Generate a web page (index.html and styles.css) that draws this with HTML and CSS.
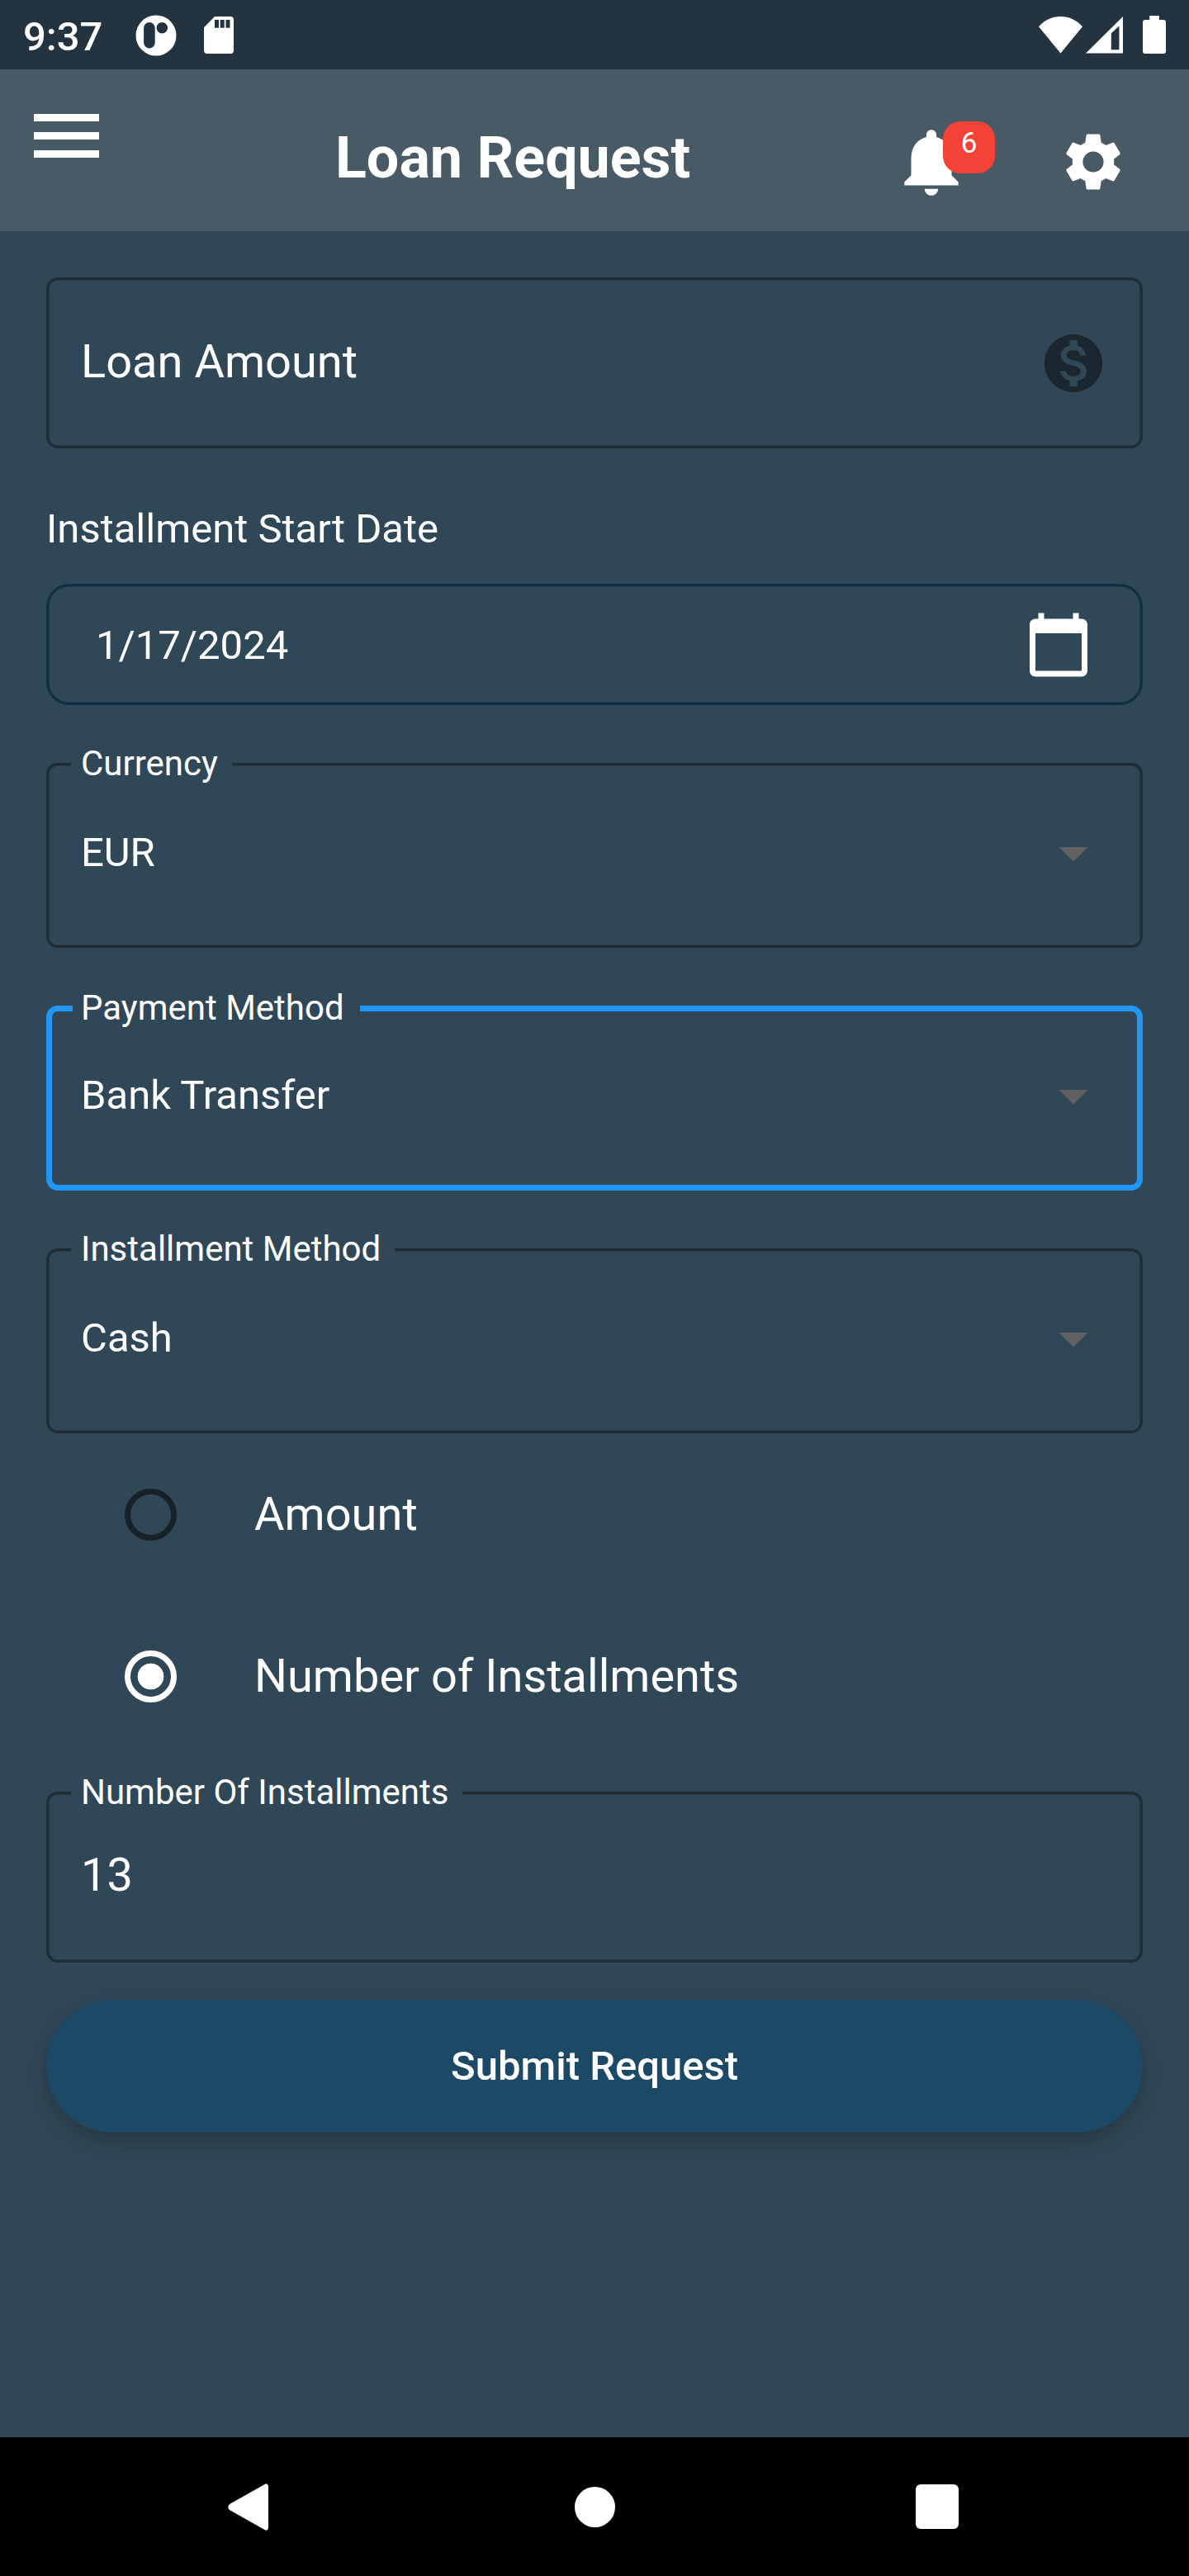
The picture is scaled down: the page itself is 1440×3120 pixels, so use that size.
FILE: index.html
```html
<!DOCTYPE html>
<html lang="en">
<head>
<meta charset="utf-8">
<title>Loan Request</title>
<link rel="stylesheet" href="styles.css">
</head>
<body>
<header class="status">
  <span class="status-time">9:37</span>
  <svg class="status-app" viewBox="0 0 50 50" width="50" height="50"><path fill-rule="evenodd" d="M25 .5a24.5 24.5 0 1 1 0 49a24.5 24.5 0 0 1 0-49zM16.9 9a6.8 6.8 0 0 0-6.8 6.8v18a6.8 6.8 0 0 0 13.6 0v-18A6.8 6.8 0 0 0 16.9 9zM32.3 9a6.8 6.8 0 1 0 0 13.6a6.8 6.8 0 0 0 0-13.6z"/></svg>
  <svg class="status-sd" viewBox="0 0 36 45" width="36" height="45"><path fill-rule="evenodd" d="M13 0H32a4 4 0 0 1 4 4V41a4 4 0 0 1-4 4H4a4 4 0 0 1-4-4V13.3zM13 4v9.7h5V4zM19.7 4v9.7h5V4zM26.5 4v9.7h5V4z"/></svg>
  <div class="status-right">
    <svg class="wifi" viewBox="0 0 53 45" width="53" height="45"><path d="M0 12.3C7 4.5 16 0 26.5 0S46 4.5 53 12.3L26.5 44.5z"/></svg>
    <svg class="signal" viewBox="0 0 45 45" width="45" height="45"><path fill-rule="evenodd" d="M45 0V44.5H0zM40.4 11.5L30.8 20.3V40.2H40.4z"/></svg>
    <svg class="battery" viewBox="0 0 28 46" width="28" height="46"><path d="M8.2 0H19.8V5H25a3 3 0 0 1 3 3V43a3 3 0 0 1-3 3H3a3 3 0 0 1-3-3V8a3 3 0 0 1 3-3H8.2z"/></svg>
  </div>
</header>

<nav class="appbar">
  <svg class="menu" viewBox="0 0 79 53" width="79" height="53"><path d="M0 0h79v9H0zM0 22h79v9H0zM0 44h79v9H0z"/></svg>
  <h1 class="title">Loan Request</h1>
  <div class="bell-wrap">
    <svg viewBox="0 0 24 24" width="98" height="98"><path d="M12 22c1.1 0 2-.9 2-2h-4c0 1.1.89 2 2 2zm6-6v-5c0-3.07-1.64-5.64-4.5-6.32V4c0-.83-.67-1.5-1.5-1.5s-1.5.67-1.5 1.5v.68C7.63 5.36 6 7.92 6 11v5l-2 2v1h16v-1l-2-2z"/></svg>
    <span class="badge">6</span>
  </div>
  <svg class="gear" viewBox="0 0 24 24" width="84" height="84"><path d="M19.14 12.94c.04-.3.06-.61.06-.94 0-.32-.02-.64-.07-.94l2.03-1.58c.18-.14.23-.41.12-.61l-1.92-3.32c-.12-.22-.37-.29-.59-.22l-2.39.96c-.5-.38-1.03-.7-1.62-.94l-.36-2.54c-.04-.24-.24-.41-.48-.41h-3.84c-.24 0-.43.17-.47.41l-.36 2.54c-.59.24-1.13.57-1.62.94l-2.39-.96c-.22-.08-.47 0-.59.22L2.74 8.87c-.12.21-.08.47.12.61l2.03 1.58c-.05.3-.09.63-.09.94s.02.64.07.94l-2.03 1.58c-.18.14-.23.41-.12.61l1.92 3.32c.12.22.37.29.59.22l2.39-.96c.5.38 1.03.7 1.62.94l.36 2.54c.05.24.24.41.48.41h3.84c.24 0 .44-.17.47-.41l.36-2.54c.59-.24 1.13-.56 1.62-.94l2.39.96c.22.08.47 0 .59-.22l1.92-3.32c.12-.22.07-.47-.12-.61l-2.01-1.58zM12 15.6c-1.98 0-3.6-1.62-3.6-3.6s1.62-3.6 3.6-3.6 3.6 1.62 3.6 3.6-1.62 3.6-3.6 3.6z"/></svg>
</nav>

<main class="form">
  <div class="field amount">
    <span class="text-lg">Loan Amount</span>
    <svg class="money" viewBox="0 0 24 24" width="84" height="84"><path d="M12 2C6.48 2 2 6.48 2 12s4.48 10 10 10 10-4.480 10-10S17.52 2 12 2zm1.41 16.09V20h-2.67v-1.93c-1.71-.36-3.16-1.46-3.27-3.4h1.96c.1 1.05.82 1.87 2.65 1.87 1.96 0 2.4-.98 2.4-1.59 0-.83-.44-1.61-2.67-2.14-2.48-.6-4.18-1.62-4.18-3.67 0-1.72 1.39-2.84 3.11-3.21V4h2.67v1.95c1.86.45 2.79 1.86 2.85 3.39H14.3c-.05-1.11-.64-1.87-2.22-1.87-1.5 0-2.4.68-2.4 1.64 0 .84.65 1.39 2.67 1.91s4.18 1.39 4.18 3.91c-.01 1.83-1.38 2.83-3.12 3.16z"/></svg>
  </div>

  <p class="caption">Installment Start Date</p>
  <div class="field date">
    <span class="text-md">1/17/2024</span>
    <svg viewBox="0 0 24 24" width="84" height="84"><path d="M20 3h-1V1h-2v2H7V1H5v2H4c-1.1 0-2 .9-2 2v16c0 1.1.9 2 2 2h16c1.1 0 2-.9 2-2V5c0-1.1-.9-2-2-2zm0 18H4V8h16v13z"/></svg>
  </div>

  <div class="field select">
    <span class="label">Currency</span>
    <div class="select-row"><span class="text-md">EUR</span><svg class="arrow" viewBox="0 0 24 24" width="84" height="84"><path d="M7 10l5 5 5-5z"/></svg></div>
  </div>

  <div class="field select focused">
    <span class="label">Payment Method</span>
    <div class="select-row"><span class="text-md">Bank Transfer</span><svg class="arrow" viewBox="0 0 24 24" width="84" height="84"><path d="M7 10l5 5 5-5z"/></svg></div>
  </div>

  <div class="field select">
    <span class="label">Installment Method</span>
    <div class="select-row"><span class="text-md">Cash</span><svg class="arrow" viewBox="0 0 24 24" width="84" height="84"><path d="M7 10l5 5 5-5z"/></svg></div>
  </div>

  <div class="radios">
    <div class="radio"><span class="dot"></span><span class="text-lg">Amount</span></div>
    <div class="radio checked"><span class="dot"></span><span class="text-lg">Number of Installments</span></div>
  </div>

  <div class="field number">
    <span class="label">Number Of Installments</span>
    <span class="text-lg value">13</span>
  </div>

  <button class="submit">Submit Request</button>
</main>

<footer class="navbar">
  <svg class="nav-back" viewBox="0 0 49 57" width="49" height="57"><path d="M49 3V54Q48 58 44.5 56L2 32Q-1.5 28.5 2 25L44.5 1Q48-1 49 3z"/></svg>
  <span class="nav-home"></span>
  <span class="nav-recent"></span>
</footer>
</body>
</html>
```

FILE: styles.css
```css
* { box-sizing: border-box; }

body {
  margin: 0;
  width: 1440px;
  height: 3120px;
  display: flex;
  flex-direction: column;
  background: #304757;
  color: #fff;
  font-family: Roboto, "Liberation Sans", sans-serif;
}

svg { display: block; fill: #fff; flex: none; }

/* Status bar */
.status { height: 84px; background: #233440; display: flex; align-items: center; padding: 0 28px; }
.status-time { font-size: 49px; font-weight: 500; line-height: 60px; margin-top: 5px; width: 136px; }
.status-app { margin-top: 1px; }
.status-sd { margin-left: 33px; }
.status-right { margin-left: auto; display: flex; align-items: center; }
.signal { margin-left: 4px; }
.battery { margin-left: 24px; }

/* App bar */
.appbar { height: 196px; background: #485a66; display: flex; align-items: flex-start; padding: 0 73px 0 41px; }
.menu { margin-top: 54px; }
.title { margin: 65px 0 0 286px; font-size: 70px; font-weight: 700; line-height: 84px; width: 673px; white-space: nowrap; }
.bell-wrap { position: relative; margin-top: 63px; }
.badge {
  position: absolute;
  left: 63px;
  top: 0;
  width: 63px;
  height: 63px;
  border-radius: 21px;
  background: #f44336;
  font-size: 35px;
  line-height: 53px;
  text-align: center;
}
.gear { margin: 70px 0 0 105px; }

/* Form */
.form { flex: 1; padding: 56px 56px 0; display: flex; flex-direction: column; }

.text-lg { font-size: 56px; line-height: 66px; }
.text-md { font-size: 49px; line-height: 58px; }

.field {
  border: 3px solid #1e2d36;
  box-shadow: inset 0 0 0 0.5px #1e2d36;
  border-radius: 14px;
  display: flex;
  padding: 0 39px;
}
.amount { height: 207px; align-items: center; justify-content: space-between; }
.amount .text-lg { padding-bottom: 3px; }
.money { fill: #1a2730; }

.caption { margin: 69px 0 0; font-size: 49px; line-height: 58px; }

.date {
  margin-top: 37px;
  height: 147px;
  border-color: #102f44;
  box-shadow: inset 0 0 0 0.5px #102f44;
  border-radius: 28px;
  padding: 0 57px;
  align-items: center;
  justify-content: space-between;
}
.date .text-md { padding-top: 2px; }

.select, .number { flex-direction: column; align-items: stretch; }
.select { height: 224px; margin-top: 70px; }
.label {
  align-self: flex-start;
  margin: -27px 0 0 -12px;
  padding: 0 17px 0 12px;
  background: #304757;
  font-size: 42px;
  line-height: 50px;
}
.select-row { display: flex; align-items: center; justify-content: space-between; height: 84px; margin-top: 41px; }
.arrow { fill: #616161; }

.focused { border: 7px solid #2196f3; box-shadow: none; padding: 0 35px; }
.focused .label { margin: -29px 0 0 -10px; padding: 0 19px 0 10px; }
.focused .select-row { margin-top: 39px; }

.radios { display: flex; flex-direction: column; }
.radio { height: 196px; display: flex; align-items: center; gap: 94.5px; padding-left: 94.5px; }
.dot {
  width: 63px;
  height: 63px;
  border-radius: 50%;
  border: 7px solid #162128;
}
.checked .dot { border-color: #fff; background: radial-gradient(circle, #fff 15.5px, transparent 16.2px); }

.number { height: 207px; margin-top: 42px; }
.value { margin-top: 42px; }

.submit {
  margin-top: 45px;
  height: 161px;
  border: 0;
  border-radius: 80.5px;
  background: #1c4965;
  color: #fff;
  font: 500 49px/58px Roboto, "Liberation Sans", sans-serif;
  box-shadow: 0 10px 24px rgba(0, 0, 0, 0.22);
}

/* System navigation */
.navbar { height: 168px; background: #000; display: flex; align-items: center; padding-left: 276px; }
.nav-home { width: 49px; height: 49px; border-radius: 50%; background: #fff; margin-left: 370.5px; }
.nav-recent { width: 52px; height: 54px; border-radius: 6px; background: #fff; margin-left: 364.5px; }
```
